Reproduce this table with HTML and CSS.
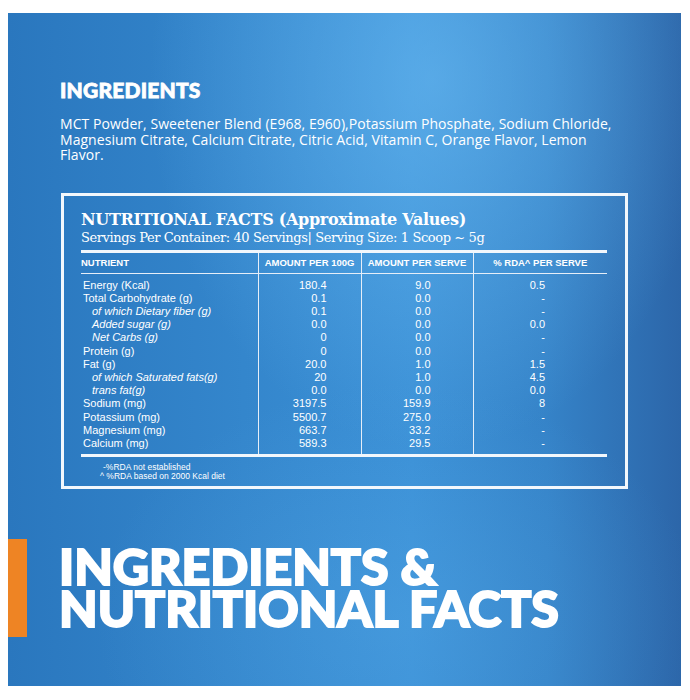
FILE: index.html
```html
<!DOCTYPE html>
<html>
<head>
<meta charset="utf-8">
<link rel="stylesheet" href="styles.css">
</head>
<body>
<div class="panel">
  <h2 class="ing-title">INGREDIENTS</h2>
  <p class="ing-text">MCT Powder, Sweetener Blend (E968, E960),Potassium Phosphate, Sodium Chloride,<br>Magnesium Citrate, Calcium Citrate, Citric Acid, Vitamin C, Orange Flavor, Lemon<br>Flavor.</p>
  <div class="facts">
    <div class="facts-title">NUTRITIONAL FACTS (Approximate Values)</div>
    <div class="facts-sub">Servings Per Container: 40 Servings| Serving Size: 1 Scoop ~ 5g</div>
    <table class="nt">
      <colgroup><col class="c1"><col class="c2"><col class="c3"><col class="c4"></colgroup>
      <thead>
        <tr><th class="hl">NUTRIENT</th><th>AMOUNT PER 100G</th><th>AMOUNT PER SERVE</th><th>% RDA^ PER SERVE</th></tr>
      </thead>
      <tbody>
        <tr class="first"><td>Energy (Kcal)</td><td>180.4</td><td>9.0</td><td>0.5</td></tr>
        <tr><td>Total Carbohydrate (g)</td><td>0.1</td><td>0.0</td><td>-</td></tr>
        <tr><td class="sub">of which Dietary fiber (g)</td><td>0.1</td><td>0.0</td><td>-</td></tr>
        <tr><td class="sub">Added sugar (g)</td><td>0.0</td><td>0.0</td><td>0.0</td></tr>
        <tr><td class="sub">Net Carbs (g)</td><td>0</td><td>0.0</td><td>-</td></tr>
        <tr><td>Protein (g)</td><td>0</td><td>0.0</td><td>-</td></tr>
        <tr><td>Fat (g)</td><td>20.0</td><td>1.0</td><td>1.5</td></tr>
        <tr><td class="sub">of which Saturated fats(g)</td><td>20</td><td>1.0</td><td>4.5</td></tr>
        <tr><td class="sub">trans fat(g)</td><td>0.0</td><td>0.0</td><td>0.0</td></tr>
        <tr><td>Sodium (mg)</td><td>3197.5</td><td>159.9</td><td>8</td></tr>
        <tr><td>Potassium (mg)</td><td>5500.7</td><td>275.0</td><td>-</td></tr>
        <tr><td>Magnesium (mg)</td><td>663.7</td><td>33.2</td><td>-</td></tr>
        <tr class="last"><td>Calcium (mg)</td><td>589.3</td><td>29.5</td><td>-</td></tr>
      </tbody>
    </table>
    <div class="notes">
      <div class="n1">-%RDA not established</div>
      <div class="n2">^ %RDA based on 2000 Kcal diet</div>
    </div>
  </div>
  <div class="banner">
    <div class="accent"></div>
    <h1 class="big">INGREDIENTS &amp;<br>NUTRITIONAL FACTS</h1>
  </div>
</div>
</body>
</html>
```

FILE: styles.css
```css
html, body {
  margin: 0;
  padding: 0;
  background: #ffffff;
}
.panel {
  box-sizing: border-box;
  width: 673px;
  height: 673px;
  margin: 13px 0 0 8px;
  padding: 0 0 0 52px;
  position: relative;
  color: #ffffff;
  background:
    radial-gradient(ellipse 42% 55% at 63% 10%, rgba(112, 192, 246, 0.55), rgba(112, 192, 246, 0) 100%),
    radial-gradient(ellipse 45% 35% at 58% 90%, rgba(86, 170, 232, 0.35), rgba(86, 170, 232, 0) 100%),
    linear-gradient(90deg, #2a77be 0%, #3486cc 35%, #3b90d6 60%, #3583c8 80%, #2c66a9 100%);
  display: flex;
  flex-direction: column;
  align-items: flex-start;
}
.ing-title {
  margin: 66px 0 0 0;
  font-family: Lato, "Noto Sans", sans-serif;
  font-weight: 900;
  font-size: 21px;
  line-height: 22px;
  letter-spacing: 0.2px;
  -webkit-text-stroke: 0.8px #ffffff;
}
.ing-text {
  margin: 15px 0 0 0;
  font-family: "Open Sans", Lato, sans-serif;
  font-size: 14px;
  line-height: 15.5px;
  letter-spacing: 0.05px;
}
.facts {
  box-sizing: border-box;
  width: 567px;
  height: 296px;
  margin: 30px 0 0 1px;
  border: 3px solid #f2f7fc;
  padding: 14px 17px 0 17px;
}
.facts-title {
  font-family: "DejaVu Serif", serif;
  font-weight: bold;
  font-size: 16px;
  line-height: 19px;
  letter-spacing: -0.3px;
}
.facts-sub {
  font-family: "DejaVu Serif", serif;
  font-weight: normal;
  font-size: 13px;
  line-height: 17px;
  letter-spacing: -0.4px;
}
.nt {
  margin-top: 4px;
  width: 526px;
  border-collapse: collapse;
  table-layout: fixed;
  font-family: "Liberation Sans", Arial, sans-serif;
  color: #ffffff;
}
.c1 { width: 177px; }
.c2 { width: 103px; }
.c3 { width: 112px; }
.c4 { width: 134px; }
.nt th {
  font-size: 9.5px;
  font-weight: bold;
  line-height: 20px;
  padding: 0;
  text-align: center;
  border-top: 3px solid #f2f7fc;
  border-bottom: 1.5px solid #e6eef8;
}
.nt th.hl {
  text-align: left;
}
.nt th + th,
.nt td + td {
  border-left: 1.5px solid #e6eef8;
}
.nt td {
  font-size: 11px;
  line-height: 13.2px;
  padding: 0;
  text-align: right;
  white-space: nowrap;
}
.nt td:first-child {
  text-align: left;
  padding-left: 2px;
}
.nt td.sub {
  font-style: italic;
  padding-left: 11px;
}
.nt td:nth-child(2) { padding-right: 34px; }
.nt td:nth-child(3) { padding-right: 42px; }
.nt td:nth-child(4) { padding-right: 62px; }
.nt tr.first td { padding-top: 5px; }
.nt tr.last td {
  padding-bottom: 4px;
  border-bottom: 3px solid #f2f7fc;
}
.notes {
  margin-top: 6px;
  font-family: "Liberation Sans", Arial, sans-serif;
  font-size: 8.5px;
  line-height: 9px;
}
.n1 { padding-left: 22px; }
.n2 { padding-left: 19px; }
.banner {
  margin: 50px 0 0 -52px;
  display: flex;
  align-items: flex-start;
  gap: 32px;
}
.accent {
  width: 19px;
  height: 98px;
  background: #ee8424;
  flex: none;
}
.big {
  margin: 0;
  padding-top: 6px;
  font-family: Lato, "Noto Sans", sans-serif;
  font-weight: 900;
  font-size: 50px;
  line-height: 42px;
  letter-spacing: 0px;
  -webkit-text-stroke: 2px #ffffff;
}
```
